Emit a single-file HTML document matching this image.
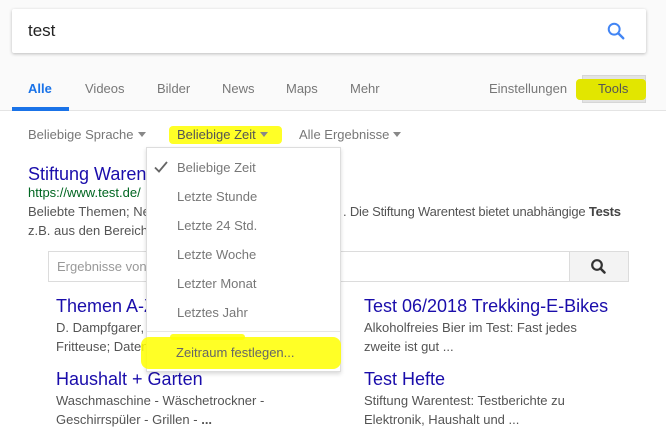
<!DOCTYPE html>
<html><head><meta charset="utf-8"><style>
*{margin:0;padding:0;box-sizing:border-box}
body{width:666px;height:438px;overflow:hidden;background:#fff;font-family:"Liberation Sans",Arial,sans-serif;position:relative}
.a{position:absolute;white-space:nowrap}
.top{position:absolute;left:0;top:0;width:666px;height:111px;background:#fafafa;border-bottom:1px solid #e4e4e4}
.sb{position:absolute;left:12px;top:9px;width:634px;height:44px;background:#fff;border-radius:2px;box-shadow:0 1px 3px rgba(0,0,0,.25)}
.tab{font-size:13px;color:#777;top:81px}
.f{font-size:13px;color:#777;top:127px}
.dd{position:absolute;left:146px;top:147px;width:195px;height:225px;background:#fff;border:1px solid #ddd;box-shadow:0 2px 4px rgba(0,0,0,.15)}
.it{font-size:13px;color:#777;left:30px}
.t{font-size:18px;color:#1a0dab}
.s{font-size:13px;color:#545454;line-height:19px}
.y{position:absolute;background:rgba(255,255,0,.85);border-radius:4px}
.tri{display:inline-block;width:0;height:0;border-left:4px solid transparent;border-right:4px solid transparent;border-top:5px solid #888;margin-left:4px;vertical-align:2px}
</style></head><body>
<div class="top"></div>
<div class="sb"></div>
<div class="a" style="left:28px;top:21px;font-size:17px;color:#222">test</div>
<svg class="a" style="left:606px;top:21px" width="20" height="20" viewBox="0 0 22 22"><circle cx="9" cy="9" r="6" fill="none" stroke="#4285f4" stroke-width="2.2"/><line x1="13.5" y1="13.5" x2="19" y2="19" stroke="#4285f4" stroke-width="2.6" stroke-linecap="round"/></svg>
<div class="a tab" style="left:28px;color:#1a73e8;font-weight:bold">Alle</div>
<div class="a" style="left:12px;top:107px;width:57px;height:4px;background:#1a73e8"></div>
<div class="a tab" style="left:85px">Videos</div>
<div class="a tab" style="left:157px">Bilder</div>
<div class="a tab" style="left:222px">News</div>
<div class="a tab" style="left:286px">Maps</div>
<div class="a tab" style="left:350px">Mehr</div>
<div class="a tab" style="left:489px">Einstellungen</div>
<div class="a" style="left:582px;top:75px;width:64px;height:28px;background:#e3e3e3;border:1px solid #d6d6d6"></div>
<div class="y" style="left:576px;top:79px;width:70px;height:21px;background:#e2e600"></div>
<div class="a tab" style="left:598px;color:#555">Tools</div>

<div class="a f" style="left:28px">Beliebige Sprache<span class="tri"></span></div>
<div class="y" style="left:169px;top:126px;width:113px;height:18px"></div>
<div class="a f" style="left:177px;color:#555">Beliebige Zeit<span class="tri"></span></div>
<div class="a f" style="left:299px">Alle Ergebnisse<span class="tri"></span></div>

<div class="a t" style="left:28px;top:164px">Stiftung Warentest</div>
<div class="a" style="left:28px;top:185px;font-size:13px;color:#006621">https://www.test.de/</div>
<div class="a s" style="left:28px;top:202px">Beliebte Themen; Neu<br>z.B. aus den Bereichen</div>
<div class="a s" style="left:343px;top:202px;letter-spacing:-0.2px">. Die Stiftung Warentest bietet unabhängige <b style="color:#444">Tests</b></div>
<div class="a" style="left:48px;top:251px;width:581px;height:31px;border:1px solid #dcdcdc;background:#fff"></div>
<div class="a" style="left:57px;top:259px;font-size:13px;color:#999">Ergebnisse von</div>
<div class="a" style="left:569px;top:251px;width:60px;height:31px;border:1px solid #dcdcdc;background:#f3f3f3"></div>
<svg class="a" style="left:589px;top:257px" width="20" height="20" viewBox="0 0 20 20"><circle cx="8" cy="8" r="4.8" fill="none" stroke="#333" stroke-width="2.2"/><line x1="11.5" y1="11.5" x2="15.5" y2="15.5" stroke="#333" stroke-width="2.6" stroke-linecap="round"/></svg>

<div class="a t" style="left:56px;top:296px">Themen A-Z</div>
<div class="a s" style="left:56px;top:318px">D. Dampfgarer,<br>Fritteuse; Daten</div>
<div class="a t" style="left:364px;top:296px">Test 06/2018 Trekking-E-Bikes</div>
<div class="a s" style="left:364px;top:318px">Alkoholfreies Bier im Test: Fast jedes<br>zweite ist gut ...</div>
<div class="a t" style="left:56px;top:369px">Haushalt + Garten</div>
<div class="a s" style="left:56px;top:391px">Waschmaschine - Wäschetrockner -<br>Geschirrspüler - Grillen - <b>...</b></div>
<div class="a t" style="left:364px;top:369px">Test Hefte</div>
<div class="a s" style="left:364px;top:391px">Stiftung Warentest: Testberichte zu<br>Elektronik, Haushalt und ...</div>

<div class="dd">
<svg class="a" style="left:7px;top:13px" width="14" height="12" viewBox="0 0 14 12"><path d="M1 6.5 L5 10.5 L13 1" fill="none" stroke="#666" stroke-width="1.8"/></svg>
<div class="a it" style="top:12px">Beliebige Zeit</div>
<div class="a it" style="top:41px">Letzte Stunde</div>
<div class="a it" style="top:70px">Letzte 24 Std.</div>
<div class="a it" style="top:99px">Letzte Woche</div>
<div class="a it" style="top:128px">Letzter Monat</div>
<div class="a it" style="top:157px">Letztes Jahr</div>
<div class="a" style="left:0;top:183px;width:193px;height:1px;background:#e6e6e6"></div>
</div>
<div class="y" style="left:141px;top:337px;width:200px;height:32px;border-radius:8px"></div>
<div class="y" style="left:170px;top:334px;width:75px;height:6px"></div>
<div class="a" style="left:176px;top:345px;font-size:13px;color:#666">Zeitraum festlegen...</div>
</body></html>
